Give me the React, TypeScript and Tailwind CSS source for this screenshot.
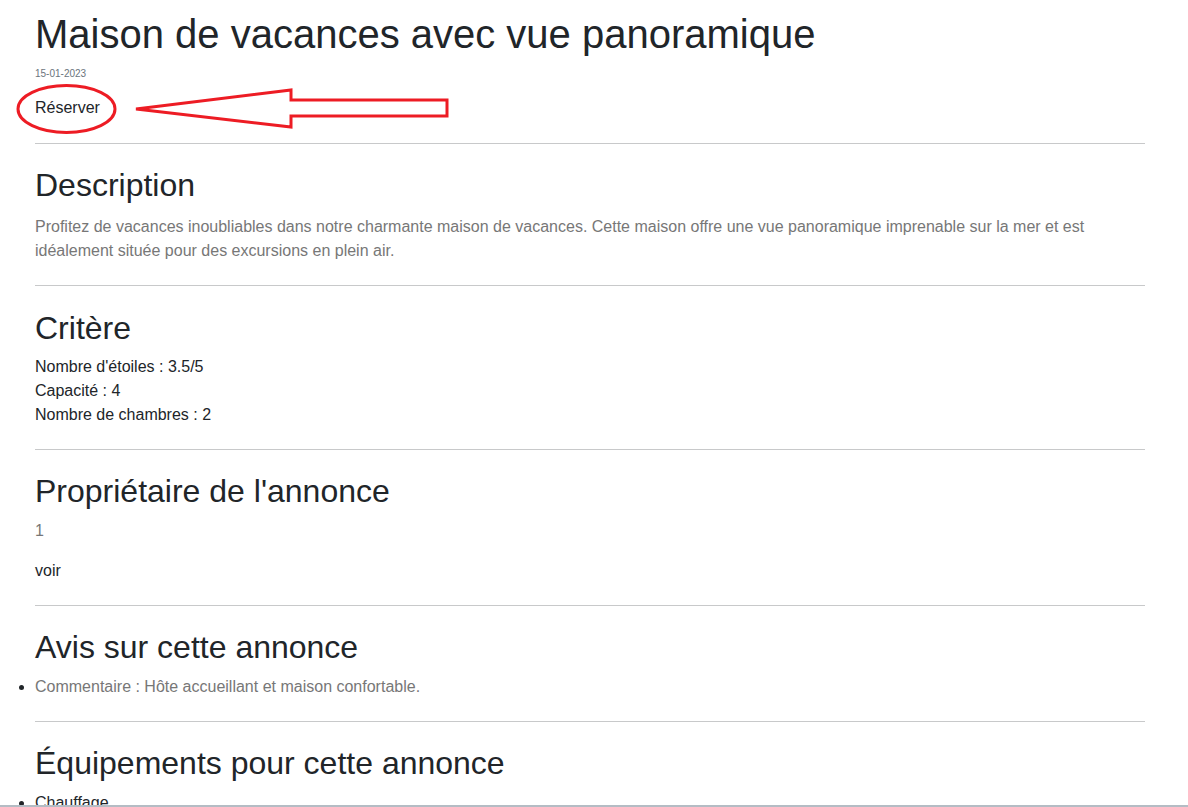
import React from "react";

export default function App() {
  return (
    <div className="relative min-h-screen bg-white font-['Liberation_Sans',Arial,sans-serif] text-[#212529]">
      <div className="ml-[35px] w-[1110px] pt-[10px]">
        <h1 className="text-[40px] leading-[48px] font-normal mb-2">
          Maison de vacances avec vue panoramique
        </h1>
        <p className="text-[10px] leading-[15px] text-[#6c757d] mb-[15px]">15-01-2023</p>
        <div className="text-[16px] leading-[24px]">Réserver</div>

        <hr className="mt-[23px] mb-[22px] border-0 border-t border-[#c8c9ca]" />

        <section>
          <h2 className="text-[32px] leading-[38px] font-normal mb-[11px]">Description</h2>
          <p className="text-[16px] leading-[24px] text-[#777777]">
            Profitez de vacances inoubliables dans notre charmante maison de vacances. Cette maison offre une vue
            panoramique imprenable sur la mer et est idéalement située pour des excursions en plein air.
          </p>
        </section>

        <hr className="mt-[22px] mb-[23px] border-0 border-t border-[#c8c9ca]" />

        <section>
          <h2 className="text-[32px] leading-[38px] font-normal mb-2">Critère</h2>
          <div className="text-[16px] leading-[24px]">
            <div>Nombre d'étoiles : 3.5/5</div>
            <div>Capacité : 4</div>
            <div>Nombre de chambres : 2</div>
          </div>
        </section>

        <hr className="mt-[22px] mb-[22px] border-0 border-t border-[#c8c9ca]" />

        <section>
          <h2 className="text-[32px] leading-[38px] font-normal mb-[9px]">Propriétaire de l'annonce</h2>
          <p className="text-[16px] leading-[24px] text-[#777777] mb-4">1</p>
          <a className="text-[16px] leading-[24px] text-[#212529] block">voir</a>
        </section>

        <hr className="mt-[22px] mb-[22px] border-0 border-t border-[#c8c9ca]" />

        <section>
          <h2 className="text-[32px] leading-[38px] font-normal mb-[9px]">Avis sur cette annonce</h2>
          <ul className="list-disc pl-0 text-[16px] leading-[24px] text-[#777777] marker:text-[#212529]">
            <li>Commentaire : Hôte accueillant et maison confortable.</li>
          </ul>
        </section>

        <hr className="mt-[22px] mb-[22px] border-0 border-t border-[#c8c9ca]" />

        <section>
          <h2 className="text-[32px] leading-[38px] font-normal mb-[9px]">Équipements pour cette annonce</h2>
          <ul className="list-disc pl-0 text-[16px] leading-[24px]">
            <li>Chauffage</li>
          </ul>
        </section>
      </div>

      <svg
        className="absolute left-0 top-0 pointer-events-none"
        width="460"
        height="140"
        viewBox="0 0 460 140"
      >
        <ellipse cx="66.5" cy="109" rx="48.5" ry="23.5" fill="none" stroke="#ed1c24" strokeWidth="3" />
        <polygon
          points="136,109 291,90 291,100 447,100 447,116 291,116 291,127"
          fill="none"
          stroke="#ed1c24"
          strokeWidth="3"
          strokeLinejoin="miter"
        />
      </svg>

      <div className="fixed left-0 right-0 bottom-0 h-[2px] bg-[#b4bcc4]" />
    </div>
  );
}
